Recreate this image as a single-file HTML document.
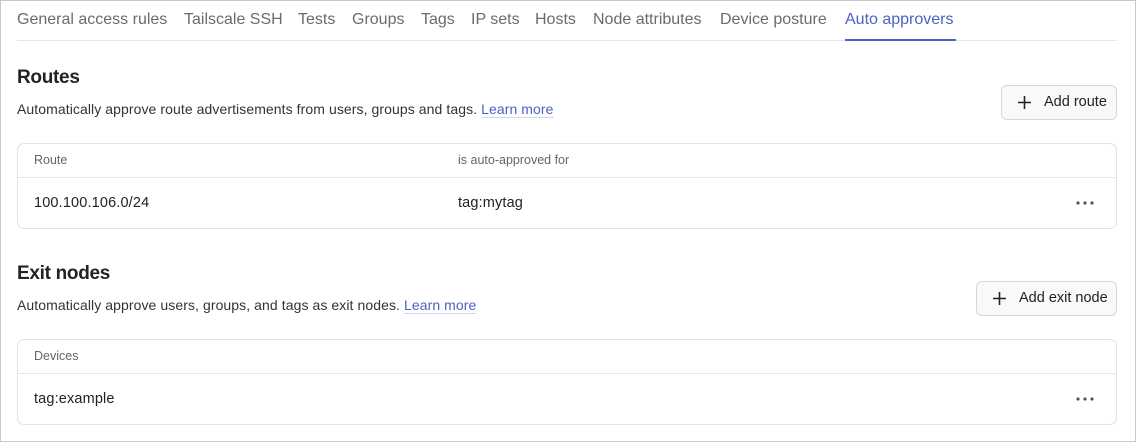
<!DOCTYPE html><html><head><style>
body{margin:0;width:1136px;height:442px;overflow:hidden;background:#fff;font-family:"Liberation Sans",sans-serif;color:#222;}
.frame{position:absolute;left:0;top:0;width:1134px;height:440px;border:1px solid #c8c8c8;}
.a{position:absolute;white-space:nowrap}
.tab{position:absolute;top:11px;font-size:16px;color:#6b6b6b;letter-spacing:0px}
.h{font-size:19px;font-weight:bold;color:#222;letter-spacing:-0.3px}
.d{font-size:14px;color:#333;letter-spacing:0.08px}
.d span{color:#4a62c4;border-bottom:1px solid #d4d9ee}
.btn{position:absolute;border:1px solid #d6d6d6;border-radius:6px;background:#f9f9f9;font-size:14.5px;color:#222;box-sizing:border-box}
.tbl{position:absolute;left:17px;width:1100px;height:86px;border:1px solid #e3e3e3;border-radius:7px;box-sizing:border-box}
.tbl .hd{position:absolute;left:0;right:0;top:0;height:33px;border-bottom:1px solid #e6e6e6}
.th{font-size:12.5px;color:#666}
.td{font-size:14.5px;color:#222;letter-spacing:0.15px}
.dots{position:absolute;right:22px;top:57px}
</style></head><body><div class="frame"></div>
<div class="tab" style="left:17px">General access rules</div>
<div class="tab" style="left:184px">Tailscale SSH</div>
<div class="tab" style="left:298px">Tests</div>
<div class="tab" style="left:352px">Groups</div>
<div class="tab" style="left:421px">Tags</div>
<div class="tab" style="left:471px">IP sets</div>
<div class="tab" style="left:535px">Hosts</div>
<div class="tab" style="left:593px">Node attributes</div>
<div class="tab" style="left:720px">Device posture</div>
<div class="tab" style="left:845px;color:#4a62c4">Auto approvers</div>
<div class="a" style="left:17px;top:40px;width:1100px;height:1px;background:#e6e6e6"></div>
<div class="a" style="left:845px;top:39px;width:111px;height:2px;background:#4a62c4"></div>

<div class="a h" style="left:17px;top:67px">Routes</div>
<div class="a d" style="left:17px;top:101px">Automatically approve route advertisements from users, groups and tags. <span>Learn more</span></div>
<div class="btn" style="left:1001px;top:85px;width:116px;height:35px"><svg class="a" style="left:15px;top:9px" width="15" height="15"><path d="M7.5 1v13M1 7.5h13" stroke="#222" stroke-width="1.6"/></svg><span class="a" style="left:42px;top:8px">Add route</span></div>
<div class="tbl" style="top:143px"><div class="hd"></div>
<div class="a th" style="left:16px;top:9px">Route</div>
<div class="a th" style="left:440px;top:9px">is auto-approved for</div>
<div class="a td" style="left:16px;top:51px">100.100.106.0/24</div>
<div class="a td" style="left:440px;top:51px">tag:mytag</div>
<svg class="dots" width="18" height="4"><circle cx="2" cy="2" r="1.6" fill="#555"/><circle cx="9" cy="2" r="1.6" fill="#555"/><circle cx="16" cy="2" r="1.6" fill="#555"/></svg></div>

<div class="a h" style="left:17px;top:263px">Exit nodes</div>
<div class="a d" style="left:17px;top:297px">Automatically approve users, groups, and tags as exit nodes. <span>Learn more</span></div>
<div class="btn" style="left:976px;top:281px;width:141px;height:35px"><svg class="a" style="left:15px;top:9px" width="15" height="15"><path d="M7.5 1v13M1 7.5h13" stroke="#222" stroke-width="1.6"/></svg><span class="a" style="left:42px;top:8px">Add exit node</span></div>
<div class="tbl" style="top:339px"><div class="hd"></div>
<div class="a th" style="left:16px;top:9px">Devices</div>
<div class="a td" style="left:16px;top:51px">tag:example</div>
<svg class="dots" width="18" height="4"><circle cx="2" cy="2" r="1.6" fill="#555"/><circle cx="9" cy="2" r="1.6" fill="#555"/><circle cx="16" cy="2" r="1.6" fill="#555"/></svg></div>
</body></html>
